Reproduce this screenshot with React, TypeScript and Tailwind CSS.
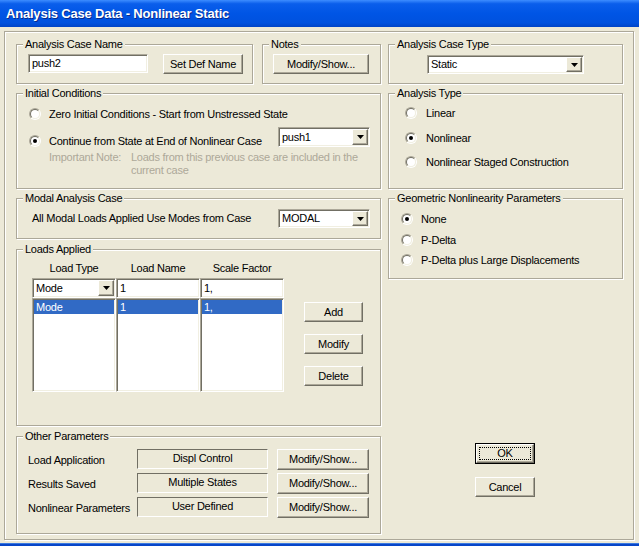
import React from "react";

const RAISED =
  "bg-[#ECE9D8] border border-t-white border-l-white border-b-[#716F64] border-r-[#716F64] shadow-[inset_-1px_-1px_0_#ACA899]";
const SUNK =
  "border border-t-[#ACA899] border-l-[#ACA899] border-b-white border-r-white shadow-[inset_1px_1px_0_#716F64,inset_-1px_-1px_0_#F1EFE2]";

function Group({
  label,
  className,
  children,
}: {
  label: string;
  className?: string;
  children?: React.ReactNode;
}) {
  return (
    <div
      className={`relative border border-[#ACA899] shadow-[inset_1px_1px_0_#fff,1px_1px_0_#fff] ${className ?? ""}`}
    >
      <span className="absolute -top-[7px] left-[6px] bg-[#ECE9D8] px-[2px] leading-[13px] whitespace-nowrap">
        {label}
      </span>
      {children}
    </div>
  );
}

function Btn({ children, className }: { children: React.ReactNode; className?: string }) {
  return (
    <div className={`flex items-center justify-center whitespace-nowrap ${RAISED} ${className ?? ""}`}>
      {children}
    </div>
  );
}

function Arrow() {
  return (
    <svg width="7" height="4" viewBox="0 0 7 4">
      <polygon points="0,0 7,0 3.5,4" fill="#000" />
    </svg>
  );
}

function Combo({ value, className }: { value: string; className?: string }) {
  return (
    <div className={`flex bg-white p-[1px] ${SUNK} ${className ?? ""}`}>
      <div className="flex-1 flex items-center pl-[2px] leading-[13px] whitespace-nowrap overflow-hidden">
        {value}
      </div>
      <div className={`w-[16px] flex items-center justify-center ${RAISED}`}>
        <Arrow />
      </div>
    </div>
  );
}

function TextBox({ value, className }: { value: string; className?: string }) {
  return (
    <div className={`flex items-center bg-white pl-[3px] whitespace-nowrap ${SUNK} ${className ?? ""}`}>
      {value}
    </div>
  );
}

function Radio({ checked }: { checked?: boolean }) {
  return (
    <span className="flex w-[12px] h-[12px] shrink-0 rounded-full border border-t-[#ACA899] border-l-[#ACA899] border-b-white border-r-white">
      <span className="flex flex-1 items-center justify-center rounded-full border border-t-[#716F64] border-l-[#716F64] border-b-[#F1EFE2] border-r-[#F1EFE2] bg-white">
        {checked && <span className="w-[4px] h-[4px] rounded-full bg-black" />}
      </span>
    </span>
  );
}

function Display({ value }: { value: string }) {
  return (
    <div className="w-[131px] h-[20px] flex items-center justify-center bg-[#ECE9D8] border border-t-[#716F64] border-l-[#716F64] border-b-white border-r-white pb-[1px]">
      {value}
    </div>
  );
}

function LoadCol({
  header,
  top,
  row,
}: {
  header: string;
  top: React.ReactNode;
  row: string;
}) {
  return (
    <div className="flex flex-col w-[84px]">
      <div className="h-[13px] leading-[13px] text-center">{header}</div>
      <div className="mt-[3px] h-[20px] flex">{top}</div>
      <div className={`h-[94px] bg-white p-[1px] ${SUNK}`}>
        <div className="h-[14px] leading-[14px] bg-[#316AC5] text-white pl-[2px]">{row}</div>
      </div>
    </div>
  );
}

export default function App() {
  return (
    <div className="w-[639px] h-[546px] bg-[#ECE9D8] overflow-hidden text-[11px] tracking-[-0.25px] text-black font-['Liberation_Sans',Arial,sans-serif]">
      {/* Title bar */}
      <div className="h-[27px] flex items-center pl-[6px] bg-[linear-gradient(180deg,#3D8DFF_0%,#0A5EEB_14%,#0055E5_50%,#0051DE_85%,#0044C6_100%)]">
        <span className="text-white font-bold text-[13px] tracking-[-0.2px] [text-shadow:1px_1px_0_#0A2A8A]">
          Analysis Case Data - Nonlinear Static
        </span>
      </div>

      {/* Body */}
      <div className="h-[516px] pt-[4px] pl-[4px]">
        <div className="w-[630px] h-[509px] border border-[#ACA899] shadow-[inset_1px_1px_0_#fff,1px_1px_0_#fff] flex pl-[11px] pt-[12px]">
          {/* Left column */}
          <div className="w-[365px] flex flex-col">
            <div className="flex gap-[9px]">
              <Group label="Analysis Case Name" className="w-[237px] h-[40px]">
                <div className="flex pl-[11px] pt-[9px]">
                  <TextBox value="push2" className="w-[120px] h-[19px]" />
                  <Btn className="ml-[15px] w-[80px] h-[20px]">Set Def Name</Btn>
                </div>
              </Group>
              <Group label="Notes" className="w-[119px] h-[40px]">
                <div className="pl-[10px] pt-[9px]">
                  <Btn className="w-[96px] h-[20px]">Modify/Show...</Btn>
                </div>
              </Group>
            </div>

            <Group label="Initial Conditions" className="mt-[9px] h-[96px]">
              <div className="pl-[12px] pt-[13px]">
                <div className="flex items-center h-[14px]">
                  <Radio />
                  <span className="ml-[8px] whitespace-nowrap">
                    Zero Initial Conditions - Start from Unstressed State
                  </span>
                </div>
                <div className="flex items-start h-[20px] mt-[6px]">
                  <div className="flex items-center h-[14px] mt-[7px] w-[249px]">
                    <Radio checked />
                    <span className="ml-[8px] whitespace-nowrap">
                      Continue from State at End of Nonlinear Case
                    </span>
                  </div>
                  <Combo value="push1" className="w-[92px] h-[20px]" />
                </div>
                <div className="mt-[4px] ml-[20px] leading-[13px] text-[#ACA899]">
                  <div className="flex">
                    <span className="w-[82px] whitespace-nowrap">Important Note:</span>
                    <span className="whitespace-nowrap">
                      Loads from this previous case are included in the
                    </span>
                  </div>
                  <div className="pl-[82px]">current case</div>
                </div>
              </div>
            </Group>

            <Group label="Modal Analysis Case" className="mt-[9px] h-[41px]">
              <div className="flex items-center pl-[15px] pt-[10px]">
                <span className="w-[246px] whitespace-nowrap">
                  All Modal Loads Applied Use Modes from Case
                </span>
                <Combo value="MODAL" className="w-[92px] h-[19px]" />
              </div>
            </Group>

            <Group label="Loads Applied" className="mt-[10px] h-[177px]">
              <div className="flex pl-[15px] pt-[12px]">
                <LoadCol
                  header="Load Type"
                  top={<Combo value="Mode" className="w-[84px] h-[20px]" />}
                  row="Mode"
                />
                <LoadCol
                  header="Load Name"
                  top={<TextBox value="1" className="w-[84px] h-[20px]" />}
                  row="1"
                />
                <LoadCol
                  header="Scale Factor"
                  top={<TextBox value="1," className="w-[84px] h-[20px]" />}
                  row="1,"
                />
                <div className="ml-[20px] mt-[40px] flex flex-col gap-[12px]">
                  <Btn className="w-[59px] h-[20px]">Add</Btn>
                  <Btn className="w-[59px] h-[20px]">Modify</Btn>
                  <Btn className="w-[59px] h-[20px]">Delete</Btn>
                </div>
              </div>
            </Group>

            <Group label="Other Parameters" className="mt-[10px] h-[98px]">
              <div className="flex flex-col pl-[11px] pt-[12px] gap-[4px]">
                {[
                  ["Load Application", "Displ Control"],
                  ["Results Saved", "Multiple States"],
                  ["Nonlinear Parameters", "User Defined"],
                ].map(([l, v]) => (
                  <div key={l} className="flex items-center h-[20px]">
                    <span className="w-[109px] pt-[2px] whitespace-nowrap">{l}</span>
                    <Display value={v} />
                    <Btn className="ml-[9px] w-[92px] h-[21px]">Modify/Show...</Btn>
                  </div>
                ))}
              </div>
            </Group>
          </div>

          {/* Right column */}
          <div className="ml-[7px] w-[235px] flex flex-col">
            <Group label="Analysis Case Type" className="h-[40px]">
              <div className="pl-[38px] pt-[10px]">
                <Combo value="Static" className="w-[157px] h-[19px]" />
              </div>
            </Group>

            <Group label="Analysis Type" className="mt-[9px] h-[96px]">
              <div className="pl-[16px] pt-[12px]">
                <div className="flex items-center h-[14px]">
                  <Radio />
                  <span className="ml-[9px]">Linear</span>
                </div>
                <div className="flex items-center h-[14px] mt-[11px]">
                  <Radio checked />
                  <span className="ml-[9px]">Nonlinear</span>
                </div>
                <div className="flex items-center h-[14px] mt-[10px]">
                  <Radio />
                  <span className="ml-[9px] whitespace-nowrap">Nonlinear Staged Construction</span>
                </div>
              </div>
            </Group>

            <Group label="Geometric Nonlinearity Parameters" className="mt-[9px] h-[81px]">
              <div className="pl-[12px] pt-[13px]">
                <div className="flex items-center h-[14px]">
                  <Radio checked />
                  <span className="ml-[8px]">None</span>
                </div>
                <div className="flex items-center h-[14px] mt-[7px]">
                  <Radio />
                  <span className="ml-[8px]">P-Delta</span>
                </div>
                <div className="flex items-center h-[14px] mt-[6px]">
                  <Radio />
                  <span className="ml-[8px] whitespace-nowrap">
                    P-Delta plus Large Displacements
                  </span>
                </div>
              </div>
            </Group>

            <div className="ml-[87px] mt-[164px] w-[60px] h-[21px] border border-black flex">
              <div className={`flex-1 p-[2px] flex ${RAISED}`}>
                <div className="flex-1 flex items-center justify-center border border-dotted border-black">
                  OK
                </div>
              </div>
            </div>
            <Btn className="ml-[87px] mt-[13px] w-[60px] h-[20px]">Cancel</Btn>
          </div>
        </div>
      </div>

      {/* Bottom frame */}
      <div className="h-[3px] bg-[#0846C8] border-t border-[#3A78E0]" />
    </div>
  );
}
